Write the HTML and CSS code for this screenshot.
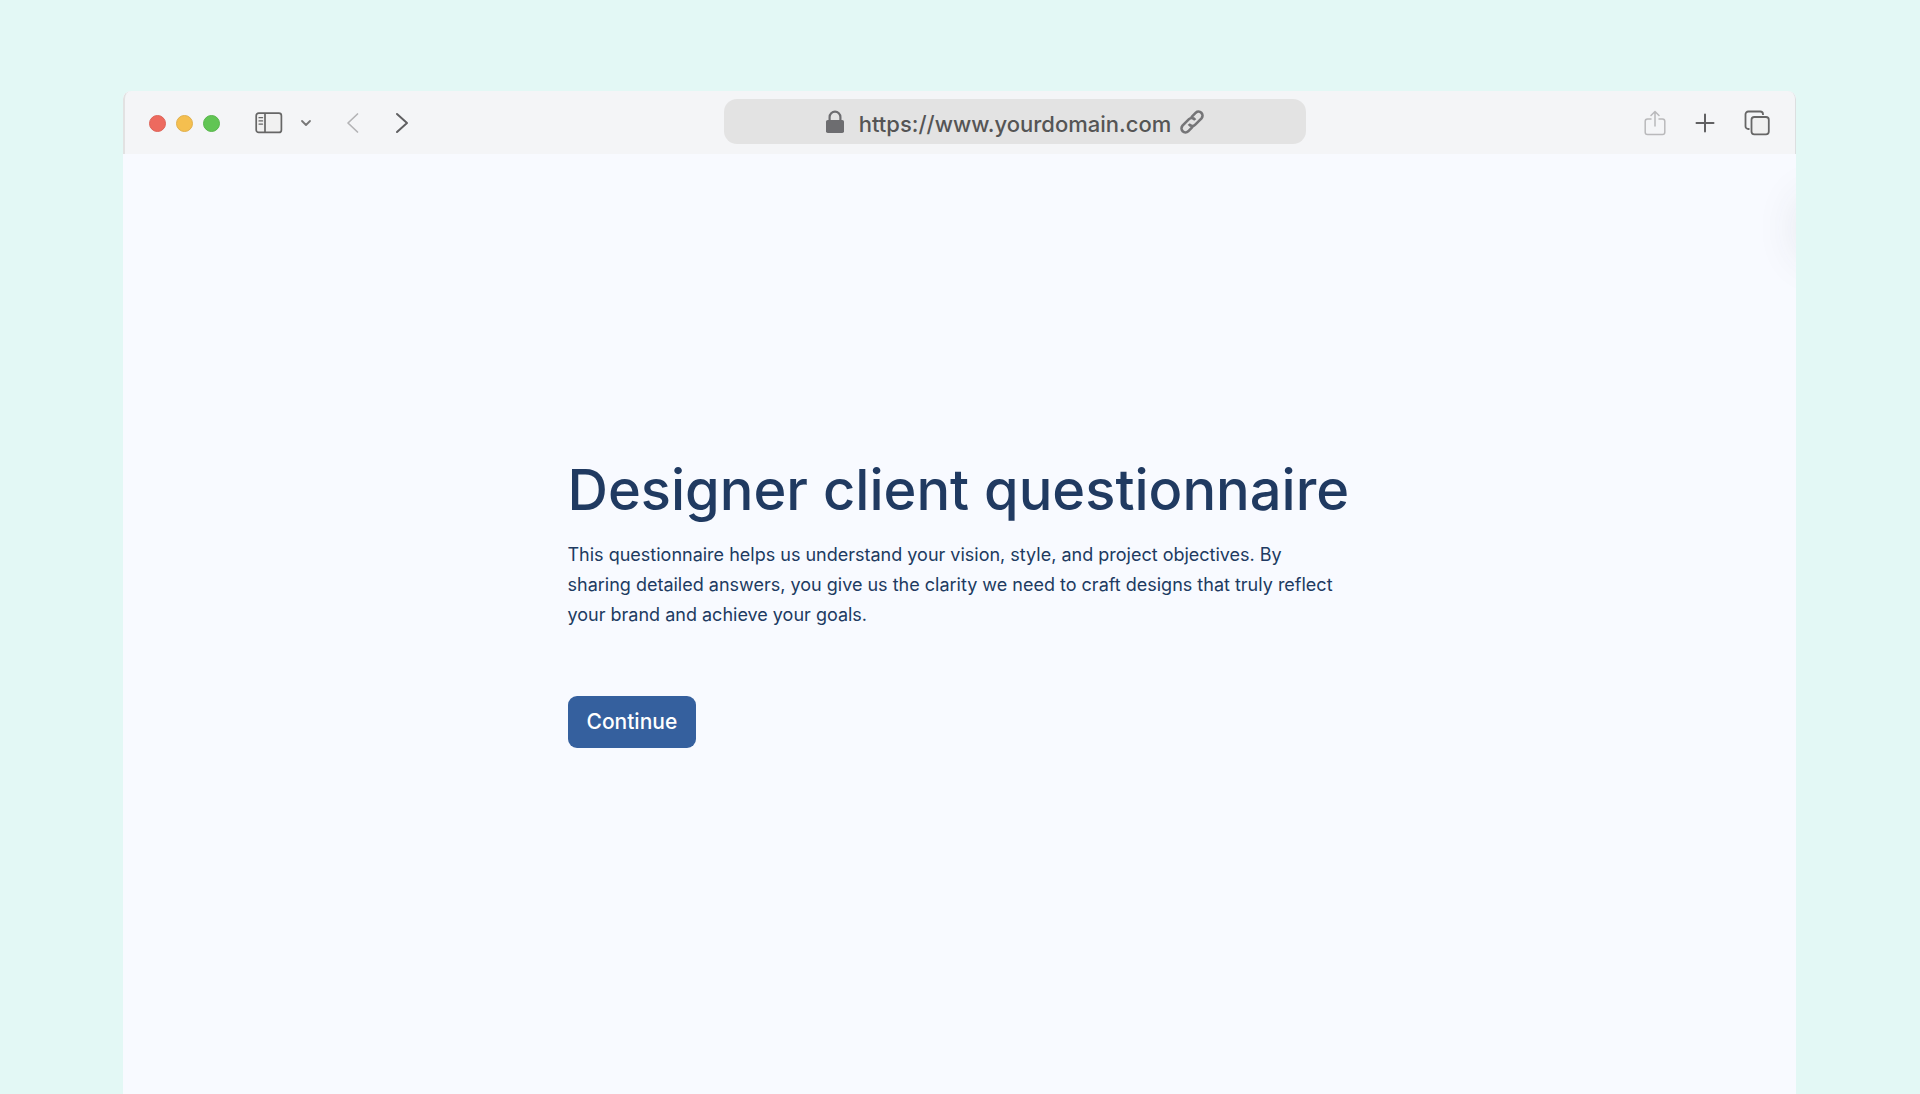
FILE: index.html
```html
<!DOCTYPE html>
<html lang="en">
<head>
<meta charset="utf-8">
<meta name="viewport" content="width=device-width, initial-scale=1">
<title>Designer client questionnaire</title>
<link rel="stylesheet" href="styles.css">
</head>
<body>
<div class="window">
  <header class="toolbar">
    <div class="toolbar-left">
      <div class="lights">
        <span class="light light-close"></span>
        <span class="light light-minimize"></span>
        <span class="light light-zoom"></span>
      </div>
      <button class="icon-button sidebar-button" type="button" aria-label="Show sidebar">
        <svg width="28" height="22" viewBox="0 0 28 22" fill="none" stroke="#666" stroke-width="1.7">
          <rect x="1.2" y="1.2" width="25.2" height="19.2" rx="2.5" fill="#f1f1f1"/>
          <path d="M10 1.5v18.6"/>
          <path d="M4 5.7h3.6M4 8.9h3.6M4 12.1h3.6" stroke-width="1.2" stroke-linecap="round"/>
        </svg>
      </button>
      <button class="icon-button menu-button" type="button" aria-label="Sidebar menu">
        <svg width="12" height="8" viewBox="0 0 12 8" fill="none" stroke="#777" stroke-width="1.8" stroke-linecap="round" stroke-linejoin="round"><path d="M2 2l4 4 4-4"/></svg>
      </button>
      <button class="icon-button back-button" type="button" aria-label="Back">
        <svg width="14" height="22" viewBox="0 0 14 22" fill="none" stroke="#b4b4b6" stroke-width="1.7" stroke-linecap="round" stroke-linejoin="round"><path d="M11.5 2L2 11l9.500 9"/></svg>
      </button>
      <button class="icon-button forward-button" type="button" aria-label="Forward">
        <svg width="14" height="22" viewBox="0 0 14 22" fill="none" stroke="#606062" stroke-width="2" stroke-linecap="round" stroke-linejoin="round"><path d="M2 2l10 9-10 9"/></svg>
      </button>
    </div>
    <div class="address">
      <svg width="20" height="24" viewBox="0 0 20 24" fill="none"><rect x="1" y="10" width="18" height="13" rx="1.8" fill="#6d6d70"/><path d="M4.600 11V7a5.400 5.400 0 0 1 10.800 0v4" stroke="#6d6d70" stroke-width="2.200"/></svg>
      <span class="url">https://www.yourdomain.com</span>
      <svg class="link-icon" width="26" height="26" viewBox="0 0 26 26" fill="none" stroke="#757577" stroke-width="2.600" stroke-linecap="butt"><path d="M12.200 8.300L16.800 3.700A4 4 0 0 1 22.500 9.300L16 15.800A4 4 0 0 1 9.800 15"/><path d="M13.800 17.700L9.200 22.300A4 4 0 0 1 3.500 16.700L10 10.200A4 4 0 0 1 16.200 11"/></svg>
    </div>
    <div class="toolbar-right">
      <button class="icon-button" type="button" aria-label="Share">
        <svg width="22" height="26" viewBox="0 0 22 26" fill="none" stroke="#b9b9bb" stroke-width="1.500" stroke-linecap="round" stroke-linejoin="round"><path d="M7 9H3.500A2.300 2.300 0 0 0 1.200 11.300v11A2.300 2.300 0 0 0 3.500 24.600h15a2.300 2.300 0 0 0 2.300-2.300v-11A2.300 2.300 0 0 0 18.500 9H15"/><path d="M11 16V1.500M7 5.500l4-4 4 4"/></svg>
      </button>
      <button class="icon-button" type="button" aria-label="New tab">
        <svg width="20" height="20" viewBox="0 0 20 20" fill="none" stroke="#606062" stroke-width="2" stroke-linecap="round"><path d="M10 1.500v17M1.500 10h17"/></svg>
      </button>
      <button class="icon-button" type="button" aria-label="Show tabs">
        <svg width="26" height="26" viewBox="0 0 26 26" fill="none" stroke="#666" stroke-width="1.800"><rect x="1.500" y="1.500" width="17.500" height="17.500" rx="2.800"/><rect x="7.500" y="7" width="17.300" height="17.300" rx="2.800" fill="#f4f4f5" stroke="#f4f5f7" stroke-width="4"/><rect x="7.500" y="7" width="17.300" height="17.300" rx="2.800" fill="#f0f0f0"/></svg>
      </button>
    </div>
  </header>
  <main class="page">
    <section class="intro">
      <h1 class="title">Designer client questionnaire</h1>
      <p class="lead">This questionnaire helps us understand your vision, style, and project objectives. By sharing detailed answers, you give us the clarity we need to craft designs that truly reflect your brand and achieve your goals.</p>
      <button class="continue" type="button">Continue</button>
    </section>
  </main>
</div>
</body>
</html>
```
FILE: styles.css
```css
* {
  box-sizing: border-box;
}

body {
  margin: 0;
  min-height: 100vh;
  display: flex;
  padding: 91px 124px 0 123px;
  background: #e3f8f5;
  font-family: Inter, "Liberation Sans", sans-serif;
}

.window {
  flex: 1;
  display: flex;
  flex-direction: column;
  border-radius: 8px 8px 0 0;
  overflow: hidden;
  background: #f8faff;
}

.toolbar {
  display: grid;
  grid-template-columns: 599px minmax(0, 582px) 1fr;
  align-items: center;
  height: 63px;
  padding-bottom: 2px;
  background: #f4f5f7;
  border-left: 2px solid #e2e2e2;
  border-right: 1px solid #dcdfe0;
  border-radius: 8px 8px 0 0;
}

.toolbar-left,
.toolbar-right,
.lights {
  display: flex;
  align-items: center;
}

.toolbar-left {
  padding: 2px 0 0 24px;
}

.lights {
  gap: 10px;
  padding-top: 1px;
}

.light {
  width: 17px;
  height: 17px;
  border-radius: 50%;
  border: 1px solid;
}

.light-close {
  background: #ed6a5f;
  border-color: #dd6459;
}

.light-minimize {
  background: #f5bf4f;
  border-color: #e0b04d;
}

.light-zoom {
  background: #61c554;
  border-color: #59b64d;
}

.icon-button {
  display: flex;
  padding: 0;
  border: 0;
  background: none;
  cursor: pointer;
}

.sidebar-button {
  margin-left: 35px;
}

.menu-button {
  margin-left: 17px;
}

.back-button {
  margin-left: 34px;
}

.forward-button {
  margin-left: 35px;
}

.address {
  display: flex;
  align-items: center;
  justify-content: center;
  height: 45px;
  border-radius: 13px;
  background: #e3e3e3;
}

.url {
  margin-left: 14px;
  padding-top: 4px;
  color: #555;
  font-size: 22px;
  font-weight: 500;
  line-height: 28px;
}

.link-icon {
  margin-left: 8px;
}

.toolbar-right {
  justify-content: flex-end;
  gap: 29px;
  padding: 2px 25px 0 0;
}

.page {
  position: relative;
  flex: 1;
  overflow: hidden;
  padding: 300px 24px 64px;
}

/* Soft shadow cast in from the right edge */
.page::after {
  content: "";
  position: absolute;
  top: 48px;
  right: -50px;
  width: 40px;
  height: 52px;
  border-radius: 20px;
  box-shadow: 0 0 50px rgba(60, 60, 70, 0.2);
}

.intro {
  max-width: 784px;
  margin: 0 auto;
}

.title {
  margin: 0;
  color: #203a61;
  font-size: 56px;
  font-weight: 550;
  line-height: 72px;
}

.lead {
  max-width: 776px;
  margin: 14px 0 0;
  color: #203a61;
  font-size: 18px;
  line-height: 30px;
}

.continue {
  display: block;
  margin-top: 66px;
  padding: 12px 19px;
  border: 0;
  border-radius: 9px;
  background: #35609e;
  color: #fff;
  font-family: inherit;
  font-size: 21px;
  font-weight: 500;
  line-height: 28px;
  cursor: pointer;
}
```
